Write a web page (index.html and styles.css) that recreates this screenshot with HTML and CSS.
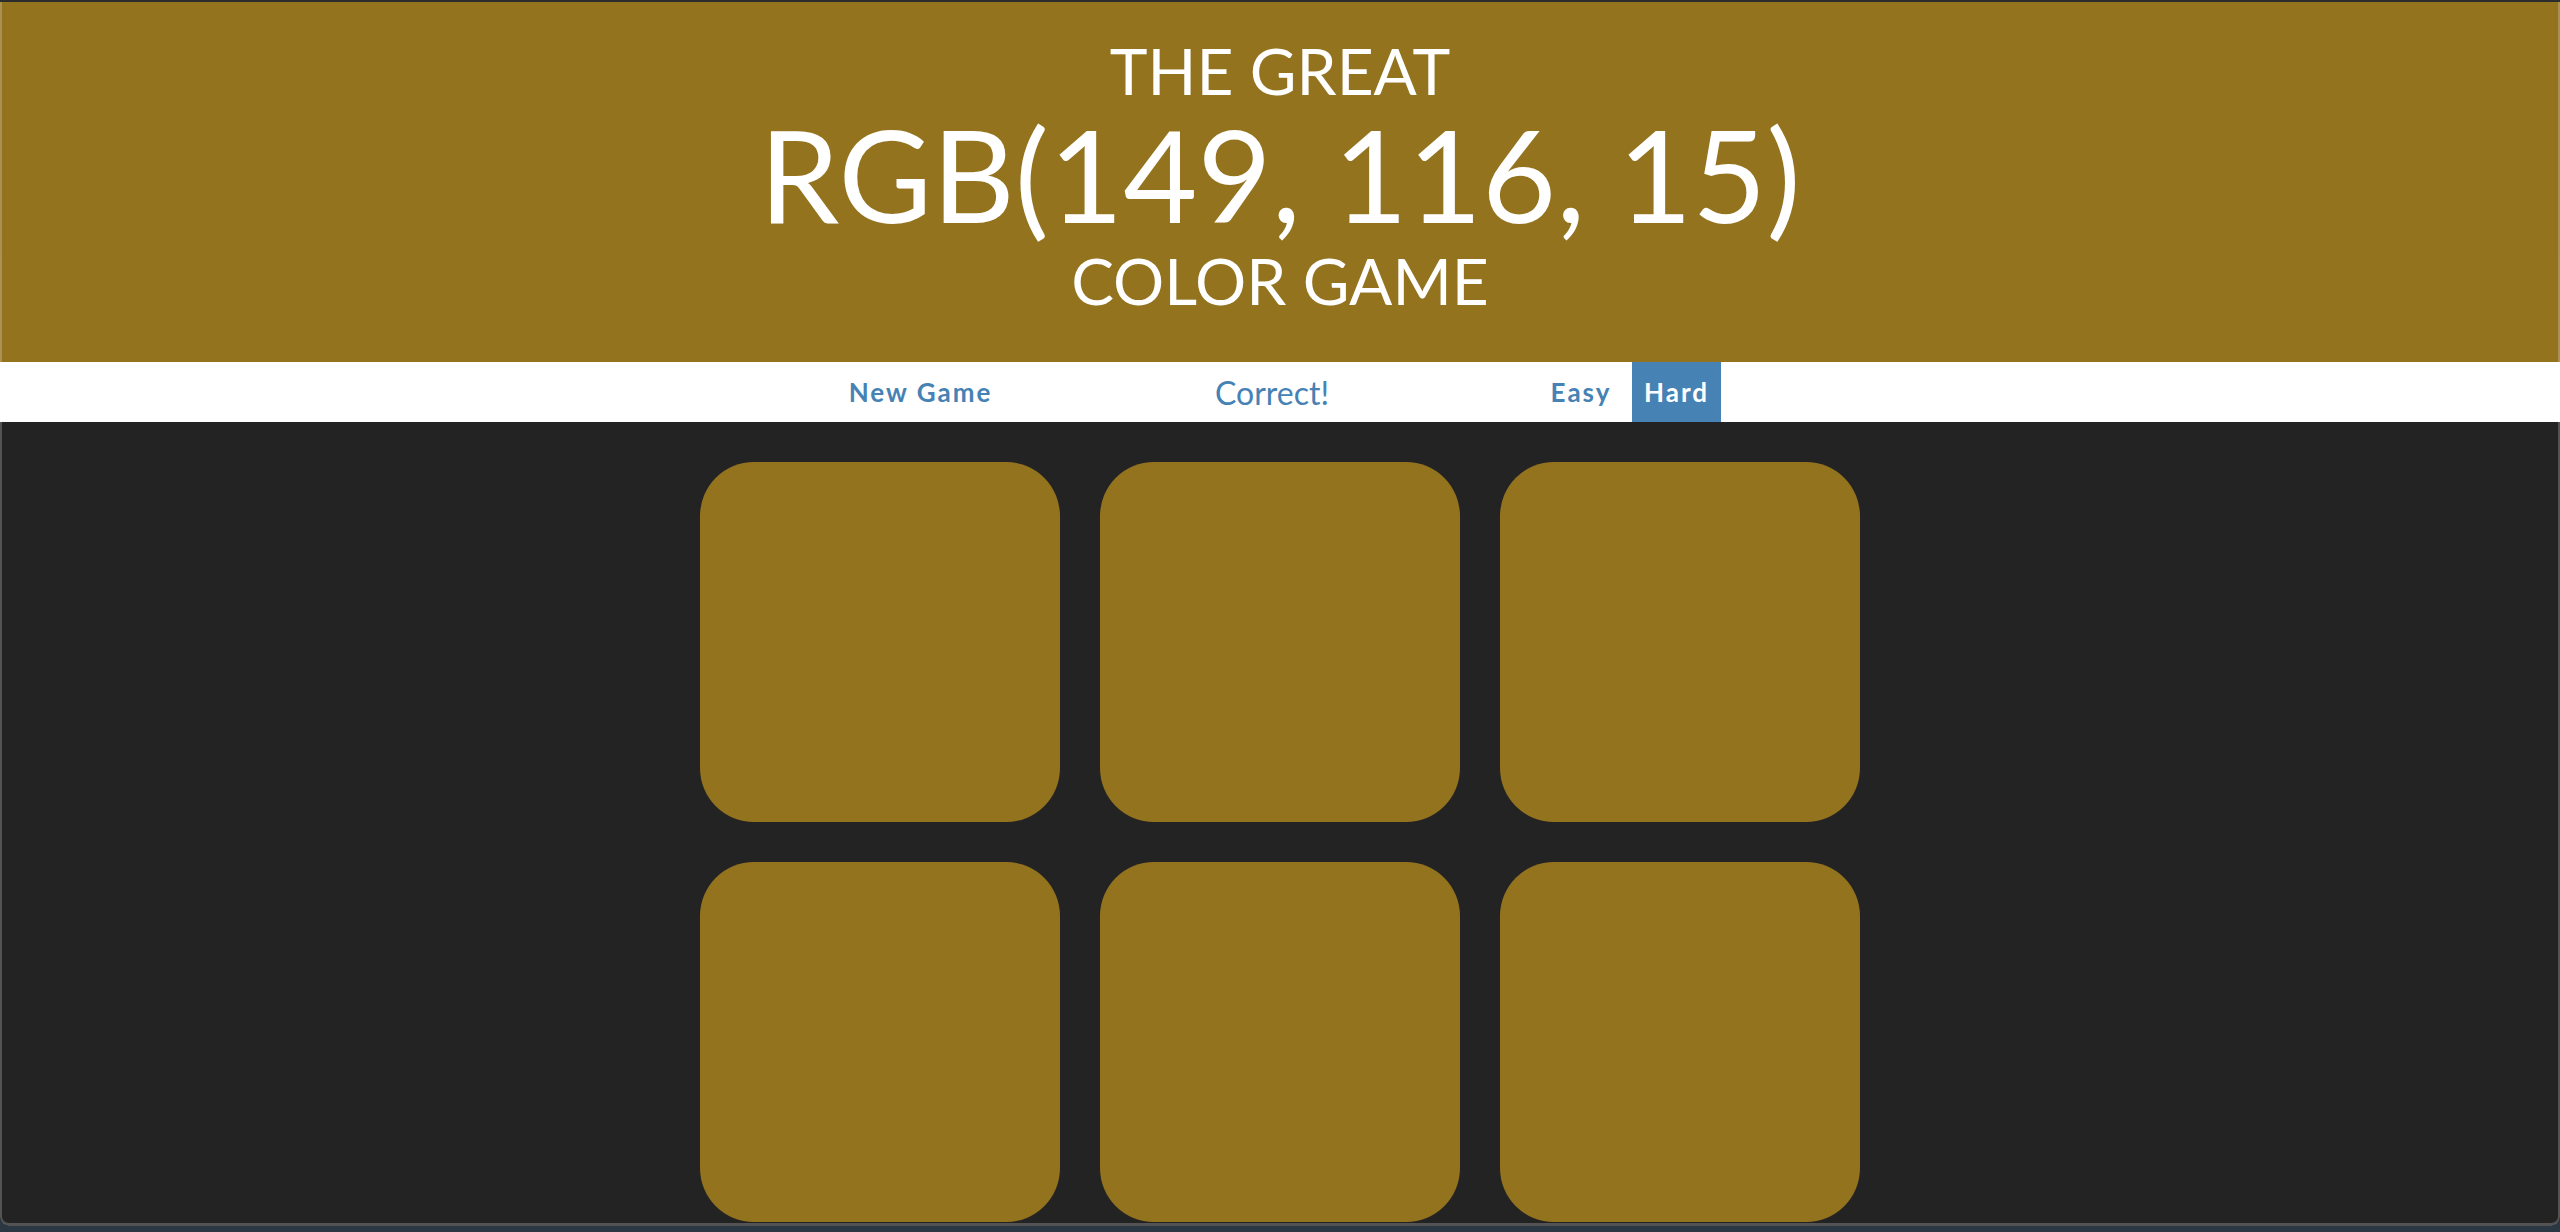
FILE: index.html
```html
<!DOCTYPE html>
<html lang="en">
<head>
<meta charset="utf-8">
<title>Color Game</title>
<link rel="stylesheet" href="styles.css">
</head>
<body>
<div class="window">
  <h1 class="header">
    <span class="line-small">THE GREAT</span>
    <span class="line-big">RGB(149, 116, 15)</span>
    <span class="line-small line-last">COLOR GAME</span>
  </h1>
  <div class="stripe">
    <button class="btn btn-reset">New Game</button>
    <span class="message">Correct!</span>
    <button class="btn btn-easy">Easy</button>
    <button class="btn btn-hard selected">Hard</button>
  </div>
  <div class="board">
    <div class="square"></div>
    <div class="square"></div>
    <div class="square"></div>
    <div class="square"></div>
    <div class="square"></div>
    <div class="square"></div>
  </div>
</div>
</body>
</html>
```

FILE: styles.css
```css
html, body {
  margin: 0;
  padding: 0;
}

body {
  background: #2b3742;
  font-family: "Lato", "Open Sans", sans-serif;
  height: 1232px;
  overflow: hidden;
}

.window {
  position: relative;
  height: 1226px;
  box-sizing: border-box;
  border-top: 2px solid #2c2c2c;
  background: #232323;
  border-radius: 0 0 9px 9px;
  overflow: hidden;
}

.window::after {
  content: "";
  position: absolute;
  inset: 0;
  border-left: 2px solid rgba(255, 255, 255, 0.22);
  border-right: 2px solid rgba(255, 255, 255, 0.22);
  border-bottom: 3px solid rgba(255, 255, 255, 0.22);
  border-radius: 0 0 9px 9px;
  pointer-events: none;
}

.header {
  margin: 0;
  height: 360px;
  box-sizing: border-box;
  padding-top: 34px;
  background: rgb(148, 115, 31);
  color: #ffffff;
  text-align: center;
  font-weight: 400;
  text-transform: uppercase;
  display: flex;
  flex-direction: column;
  align-items: center;
}

.line-small {
  display: block;
  font-size: 64px;
  line-height: 70px;
}

.line-big {
  display: block;
  font-size: 128px;
  line-height: 135px;
}

.line-last {
  line-height: 80px;
}

.stripe {
  height: 60px;
  background: #ffffff;
  display: flex;
  justify-content: center;
  align-items: stretch;
}

.btn {
  border: none;
  background: none;
  margin: 0;
  padding: 0;
  height: 60px;
  font-family: "Lato", "Open Sans", sans-serif;
  font-weight: 700;
  font-size: 26px;
  letter-spacing: 2px;
  color: steelblue;
  text-align: center;
}

.btn-reset {
  width: 163px;
}

.btn-easy {
  width: 88px;
  margin-left: 9px;
}

.btn-hard {
  width: 89px;
  margin-left: 7px;
}

.selected {
  background: steelblue;
  color: #ffffff;
}

.message {
  width: 512px;
  margin-left: 14px;
  display: flex;
  align-items: center;
  justify-content: center;
  font-size: 32px;
  font-weight: 400;
  color: steelblue;
}

.board {
  width: 1160px;
  margin: 40px auto 0;
  display: grid;
  grid-template-columns: repeat(3, 360px);
  grid-auto-rows: 360px;
  gap: 40px;
}

.square {
  background: rgb(148, 115, 31);
  border-radius: 15%;
}
```
